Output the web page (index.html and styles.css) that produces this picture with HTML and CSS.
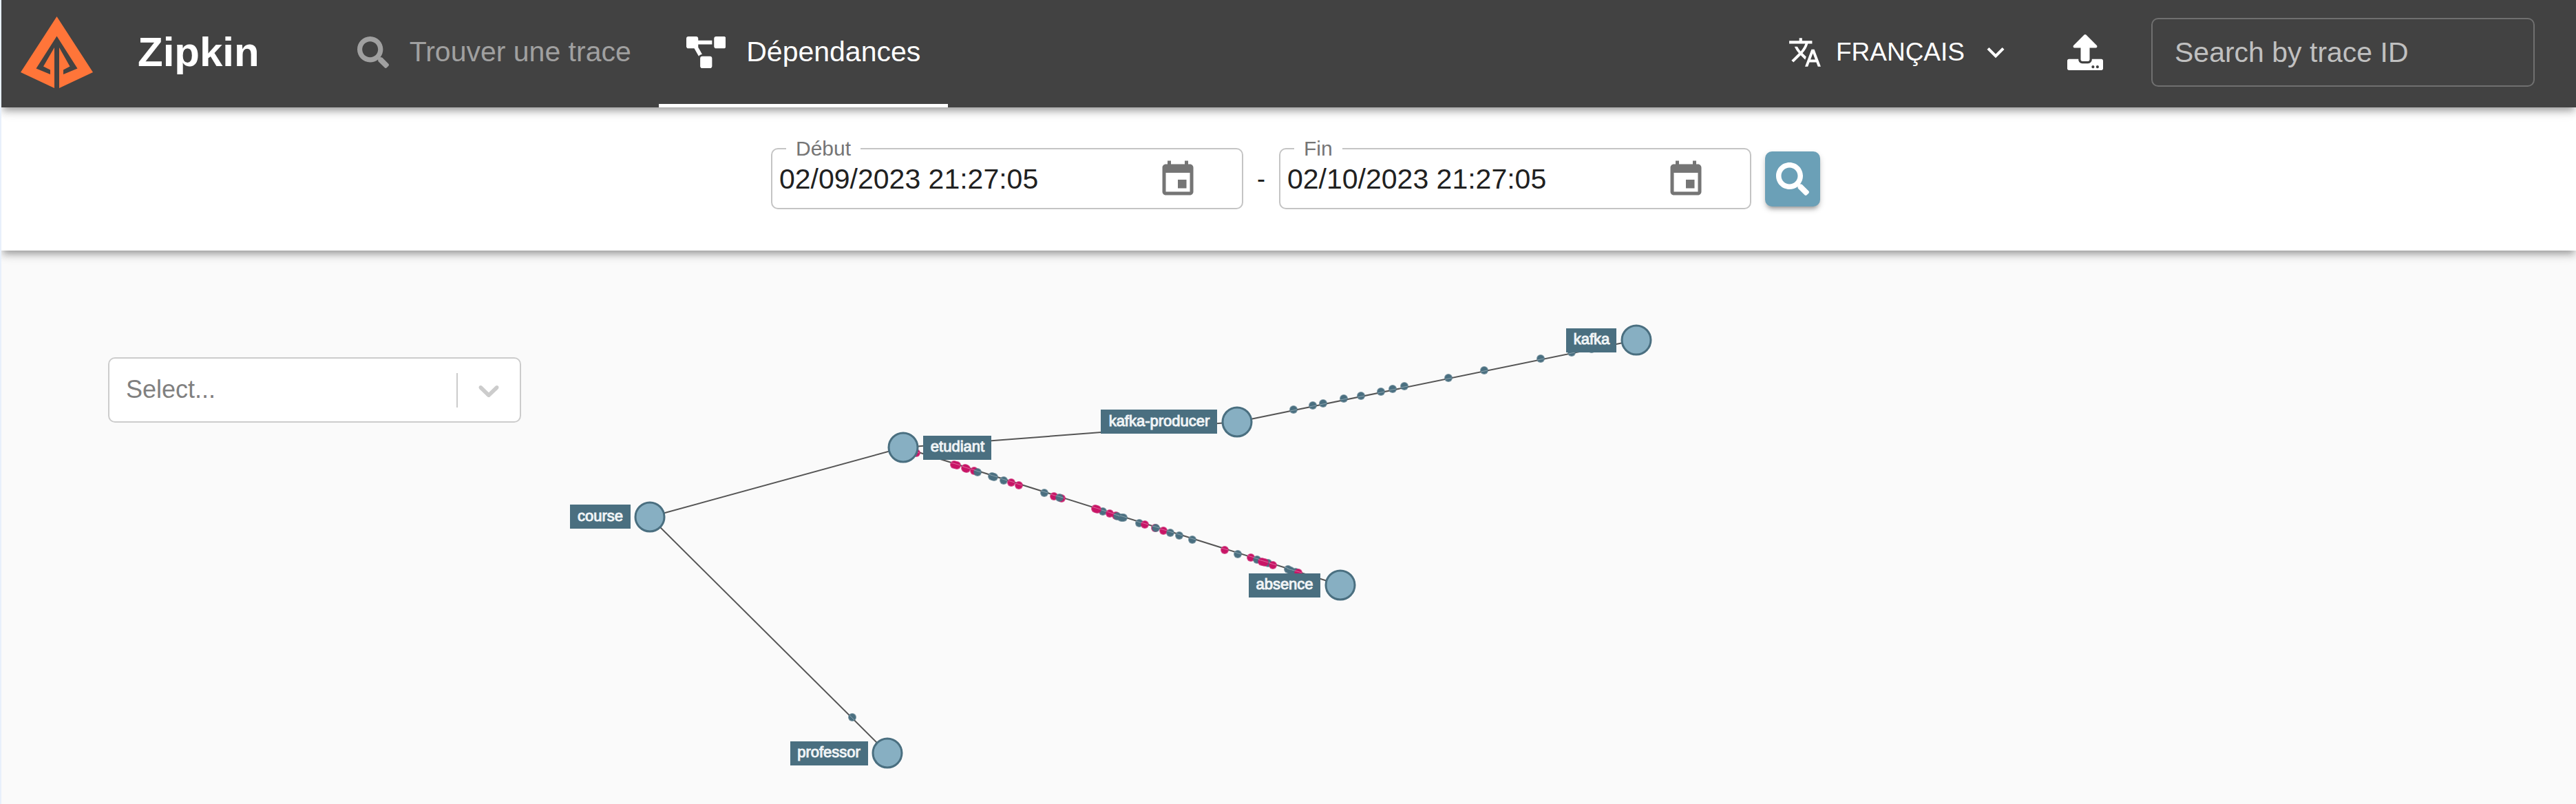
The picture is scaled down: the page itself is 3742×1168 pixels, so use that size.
FILE: index.html
```html
<!DOCTYPE html>
<html lang="fr">
<head>
<meta charset="utf-8">
<title>Zipkin</title>
<meta name="viewport" content="width=device-width, initial-scale=1">
<link rel="stylesheet" href="styles.css">
</head>
<body>
<header class="app-bar">
  <svg class="logo" viewBox="0 0 105 104" aria-hidden="true"><path d="M52.500 0 0 81 49 104V45L33 72.500 43 77.500V84L22.500 75.500 52.500 28.500 82.500 75.500 62 84V77.500L71.500 72.500 56 45V104L105 81Z"/></svg>
  <h1 class="brand">Zipkin</h1>
  <nav class="tabs">
    <a class="tab" href="#traces">
      <svg class="tab-icon" viewBox="0 0 512 512" aria-hidden="true"><path d="M505 442.700L405.300 343c-4.500-4.500-10.600-7-17-7H372c27.600-35.300 44-79.700 44-128C416 93.100 322.900 0 208 0S0 93.100 0 208s93.100 208 208 208c48.300 0 92.700-16.400 128-44v16.300c0 6.400 2.500 12.500 7 17l99.700 99.700c9.400 9.400 24.600 9.400 33.900 0l28.300-28.300c9.400-9.400 9.400-24.600.1-34zM208 336c-70.700 0-128-57.200-128-128 0-70.700 57.200-128 128-128 70.700 0 128 57.200 128 128 0 70.700-57.200 128-128 128z"/></svg>
      <span>Trouver une trace</span>
    </a>
    <a class="tab tab-active" href="#dependencies" aria-current="page">
      <svg class="tab-icon" viewBox="0 0 640 512" aria-hidden="true"><path d="M384 320H256c-17.670 0-32 14.330-32 32v128c0 17.670 14.330 32 32 32h128c17.670 0 32-14.330 32-32V352c0-17.670-14.330-32-32-32zM192 32c0-17.670-14.330-32-32-32H32C14.330 0 0 14.330 0 32v128c0 17.670 14.330 32 32 32h95.720l73.160 128.040C211.980 300.980 232.400 288 256 288h.280L192 175.510V128h224V64H192V32zM608 0H480c-17.670 0-32 14.330-32 32v128c0 17.670 14.330 32 32 32h128c17.670 0 32-14.330 32-32V32c0-17.670-14.330-32-32-32z"/></svg>
      <span>Dépendances</span>
    </a>
  </nav>
  <div class="tools">
    <button class="language" type="button">
      <svg class="icon-md" viewBox="0 0 24 24" aria-hidden="true"><path d="M12.870 15.070l-2.540-2.510.030-.030c1.740-1.940 2.980-4.170 3.710-6.530H17V4h-7V2H8v2H1v1.990h11.170C11.500 7.920 10.440 9.750 9 11.350 8.070 10.320 7.300 9.190 6.690 8h-2c.73 1.630 1.730 3.170 2.980 4.560l-5.090 5.020L4 19l5-5 3.110 3.110.760-2.040zM18.500 10h-2L12 22h2l1.120-3h4.750L21 22h2l-4.500-12zm-2.620 7l1.620-4.330L19.120 17h-3.240z"/></svg>
      <span class="language-name">FRANÇAIS</span>
      <svg class="icon-md" viewBox="0 0 24 24" aria-hidden="true"><path d="M7.410 8.590L12 13.170l4.590-4.580L18 10l-6 6-6-6 1.410-1.410z"/></svg>
    </button>
    <button class="upload" type="button" aria-label="Upload JSON">
      <svg viewBox="0 0 512 512" aria-hidden="true"><path d="M296 384h-80c-13.300 0-24-10.700-24-24V192h-87.700c-17.800 0-26.700-21.500-14.100-34.100L242.300 5.700c7.500-7.500 19.800-7.500 27.300 0l152.200 152.200c12.600 12.600 3.700 34.100-14.100 34.100H320v168c0 13.300-10.700 24-24 24zm216-8v112c0 13.300-10.700 24-24 24H24c-13.300 0-24-10.700-24-24V376c0-13.300 10.700-24 24-24h136v8c0 30.900 25.100 56 56 56h80c30.900 0 56-25.100 56-56v-8h136c13.300 0 24 10.700 24 24zm-124 88c0-11-9-20-20-20s-20 9-20 20 9 20 20 20 20-9 20-20zm64 0c0-11-9-20-20-20s-20 9-20 20 9 20 20 20 20-9 20-20z"/></svg>
    </button>
    <input class="trace-id" type="text" placeholder="Search by trace ID" aria-label="Search by trace ID">
  </div>
</header>

<form class="range-bar">
  <fieldset class="date-field">
    <legend><label for="start">Début</label></legend>
    <div class="date-row">
      <input id="start" type="text" value="02/09/2023 21:27:05">
      <button class="calendar" type="button" aria-label="Choisir la date de début">
        <svg viewBox="0 0 24 24" aria-hidden="true"><path d="M17 12h-5v5h5v-5zM16 1v2H8V1H6v2H5c-1.110 0-1.990.9-1.990 2L3 19c0 1.100.890 2 2 2h14c1.100 0 2-.9 2-2V5c0-1.100-.9-2-2-2h-1V1h-2zm3 18H5V8h14v11z"/></svg>
      </button>
    </div>
  </fieldset>
  <span class="dash">-</span>
  <fieldset class="date-field">
    <legend><label for="end">Fin</label></legend>
    <div class="date-row">
      <input id="end" type="text" value="02/10/2023 21:27:05">
      <button class="calendar" type="button" aria-label="Choisir la date de fin">
        <svg viewBox="0 0 24 24" aria-hidden="true"><path d="M17 12h-5v5h5v-5zM16 1v2H8V1H6v2H5c-1.110 0-1.990.9-1.990 2L3 19c0 1.100.890 2 2 2h14c1.100 0 2-.9 2-2V5c0-1.100-.9-2-2-2h-1V1h-2zm3 18H5V8h14v11z"/></svg>
      </button>
    </div>
  </fieldset>
  <button class="run" type="submit" aria-label="Rechercher">
    <svg viewBox="0 0 512 512" aria-hidden="true"><path d="M505 442.700L405.300 343c-4.500-4.500-10.600-7-17-7H372c27.600-35.300 44-79.700 44-128C416 93.100 322.900 0 208 0S0 93.100 0 208s93.100 208 208 208c48.300 0 92.700-16.400 128-44v16.300c0 6.400 2.500 12.500 7 17l99.700 99.700c9.400 9.400 24.600 9.400 33.900 0l28.300-28.300c9.400-9.400 9.400-24.600.1-34zM208 336c-70.700 0-128-57.200-128-128 0-70.700 57.200-128 128-128 70.700 0 128 57.200 128 128 0 70.700-57.200 128-128 128z"/></svg>
  </button>
</form>

<main class="stage">
  <svg class="graph" viewBox="2 364 3740 804" role="img" aria-label="Graphe des dépendances">
    <defs>
      <!-- one request dot per edge direction, with the edge showing faintly through -->
      <g id="down"><circle r="6" opacity=".7"/><circle r="5"/><path d="M-5-3 5 0"/></g>
      <g id="up"><circle r="6" opacity=".7"/><circle r="5"/><path d="M-5 2 5 0"/></g>
      <g id="steep"><circle r="6" opacity=".7"/><circle r="5"/><path d="M-4-3 3 4"/></g>
    </defs>
    <g class="edges">
      <path d="M944 751 1312 650"/>
      <path d="M944 751 1289 1094"/>
      <path d="M1312 650 1797 613"/>
      <path d="M1797 613 2377 494"/>
      <path d="M1312 650 1947 850"/>
    </g>
    <g class="dots">
      <use href="#steep" x="1238" y="1042"/>
      <use href="#up" x="1879" y="595"/>
      <use href="#up" x="1907" y="589"/>
      <use href="#up" x="1922" y="586"/>
      <use href="#up" x="1952" y="579"/>
      <use href="#up" x="1977" y="575"/>
      <use href="#up" x="2006" y="569"/>
      <use href="#up" x="2023" y="565"/>
      <use href="#up" x="2040" y="561"/>
      <use href="#up" x="2104" y="549"/>
      <use href="#up" x="2156" y="538"/>
      <use href="#up" x="2238" y="521"/>
      <use href="#up" x="2283" y="512"/>
      <use href="#up" x="2312" y="507"/>
      <use class="err" href="#down" x="1331" y="658"/>
      <use class="err" href="#down" x="1386" y="675"/>
      <use class="err" href="#down" x="1390" y="676"/>
      <use class="err" href="#down" x="1402" y="680"/>
      <use class="err" href="#down" x="1404" y="681"/>
      <use class="err" href="#down" x="1415" y="684"/>
      <use href="#down" x="1420" y="686"/>
      <use href="#down" x="1441" y="692"/>
      <use href="#down" x="1444" y="693"/>
      <use href="#down" x="1458" y="698"/>
      <use class="err" href="#down" x="1469" y="701"/>
      <use class="err" href="#down" x="1480" y="705"/>
      <use href="#down" x="1517" y="716"/>
      <use class="err" href="#down" x="1531" y="721"/>
      <use class="err" href="#down" x="1542" y="724"/>
      <use href="#down" x="1539" y="723"/>
      <use href="#down" x="1602" y="743"/>
      <use class="err" href="#down" x="1591" y="739"/>
      <use class="err" href="#down" x="1594" y="740"/>
      <use class="err" href="#down" x="1612" y="746"/>
      <use class="err" href="#down" x="1621" y="749"/>
      <use href="#down" x="1623" y="750"/>
      <use href="#down" x="1629" y="752"/>
      <use href="#down" x="1632" y="752"/>
      <use href="#down" x="1655" y="760"/>
      <use class="err" href="#down" x="1663" y="762"/>
      <use class="err" href="#down" x="1678" y="767"/>
      <use href="#down" x="1679" y="767"/>
      <use class="err" href="#down" x="1690" y="771"/>
      <use href="#down" x="1700" y="774"/>
      <use href="#down" x="1713" y="778"/>
      <use href="#down" x="1732" y="784"/>
      <use class="err" href="#down" x="1779" y="799"/>
      <use href="#down" x="1798" y="805"/>
      <use class="err" href="#down" x="1817" y="810"/>
      <use href="#down" x="1826" y="813"/>
      <use href="#down" x="1842" y="818"/>
      <use class="err" href="#down" x="1833" y="816"/>
      <use class="err" href="#down" x="1837" y="817"/>
      <use class="err" href="#down" x="1849" y="821"/>
      <use href="#down" x="1871" y="827"/>
      <use href="#down" x="1875" y="829"/>
      <use href="#down" x="1882" y="831"/>
      <use class="err" href="#down" x="1886" y="832"/>
    </g>
    <g class="nodes">
      <circle cx="944" cy="751" r="21"/>
      <circle cx="1312" cy="650" r="21"/>
      <circle cx="1797" cy="613" r="21"/>
      <circle cx="2377" cy="494" r="21"/>
      <circle cx="1947" cy="850" r="21"/>
      <circle cx="1289" cy="1094" r="21"/>
    </g>
    <g class="plates">
      <rect x="828" y="733" width="88" height="35"/>
      <rect x="1341" y="633" width="99" height="35"/>
      <rect x="1599" y="595" width="169" height="35"/>
      <rect x="2275" y="477" width="73" height="35"/>
      <rect x="1814" y="833" width="104" height="35"/>
      <rect x="1148" y="1077" width="113" height="35"/>
    </g>
    <g class="names">
      <text x="872" y="757">course</text>
      <text x="1391" y="656">etudiant</text>
      <text x="1684" y="619">kafka-producer</text>
      <text x="2312" y="500">kafka</text>
      <text x="1866" y="856">absence</text>
      <text x="1204" y="1100">professor</text>
    </g>
  </svg>
  <div class="service-filter">
    <select aria-label="Service">
      <option>Select...</option>
    </select>
    <span class="indicator">
      <svg class="icon-md" viewBox="0 0 20 20" aria-hidden="true"><path d="M4.516 7.548c0.436-0.446 1.043-0.481 1.576 0l3.908 3.747 3.908-3.747c0.533-0.481 1.141-0.446 1.574 0 0.436 0.445 0.408 1.197 0 1.615-0.406 0.418-4.695 4.502-4.695 4.502-0.217 0.223-0.502 0.335-0.787 0.335s-0.570-0.112-0.789-0.335c0 0-4.287-4.084-4.695-4.502s-0.436-1.170 0-1.615z"/></svg>
    </span>
  </div>
</main>
</body>
</html>
```
FILE: styles.css
```css
:root {
  --bar: #424242;
  --primary: #6ba0b7;
  --primary-dark: #4a6f80;
  --node: #87afc2;
  --error: #c81566;
  --shadow: 0 8px 8px -5px rgba(0, 0, 0, .2), 0 8px 10px rgba(0, 0, 0, .14), 0 2px 20px rgba(0, 0, 0, .12);
}

* {
  box-sizing: border-box;
}

body {
  margin: 0;
  min-height: 100vh;
  display: flex;
  flex-direction: column;
  border-left: 2px solid #e8f0fb;
  background: #fafafa;
  color: #212121;
  font-family: "Liberation Sans", Arial, sans-serif;
  font-size: 41px;
}

svg {
  display: block;
  flex: none;
  fill: currentColor;
}

button {
  display: flex;
  align-items: center;
  justify-content: center;
  padding: 0;
  border: 0;
  background: none;
  color: inherit;
  font: inherit;
  cursor: pointer;
}

input,
select {
  min-width: 0;
  margin: 0;
  color: inherit;
  font: inherit;
}

.icon-md {
  width: 50px;
  height: 50px;
}

/* Top bar */
.app-bar {
  position: relative;
  z-index: 2;
  display: flex;
  align-items: center;
  height: 156px;
  padding: 0 60px 4px 28px;
  background: var(--bar);
  color: #fff;
  box-shadow: var(--shadow);
}

.logo {
  width: 105px;
  height: 104px;
  color: #ff7539;
}

.brand {
  margin: 0 102px 0 65px;
  font-size: 60px;
  line-height: 72px;
}

.tabs {
  display: flex;
  align-self: stretch;
  margin-bottom: -4px;
}

.tab {
  display: flex;
  align-items: center;
  gap: 30px;
  padding: 0 40px;
  border-bottom: 5px solid transparent;
  color: #a0a0a0;
  text-decoration: none;
  white-space: nowrap;
}

.tab-active {
  border-bottom-color: #fff;
  color: #fff;
}

.tab-icon {
  height: 46px;
}

.tools {
  display: flex;
  align-items: center;
  margin-left: auto;
}

.language {
  font-size: 37px;
}

.language-name {
  margin: 0 20px;
}

.upload {
  margin: 0 70px 0 79px;
}

.upload svg {
  width: 52px;
  height: 52px;
}

.trace-id {
  width: 557px;
  height: 100px;
  padding: 0 32px;
  border: 2px solid #707070;
  border-radius: 10px;
  background: transparent;
}

.trace-id::placeholder {
  color: #c0c0c0;
  opacity: 1;
}

/* Date range */
.range-bar {
  position: relative;
  z-index: 1;
  display: flex;
  align-items: flex-end;
  justify-content: center;
  gap: 20px;
  padding: 45px 0 60px 20px;
  background: #fff;
  box-shadow: var(--shadow);
}

.date-field {
  width: 686px;
  min-width: 0;
  margin: 0;
  padding: 0 0 11px;
  border: 2px solid #c4c4c4;
  border-radius: 10px;
}

.date-field legend {
  margin-left: 20px;
  padding: 0 14px;
  color: #757575;
  font-size: 30px;
  line-height: 30px;
}

.date-field label {
  display: block;
}

.date-row {
  display: flex;
  align-items: center;
  padding: 0 63px 0 10px;
}

.date-row input {
  flex: 1;
  height: 60px;
  padding: 0 0 2px;
  border: 0;
  background: transparent;
}

.calendar {
  color: #757575;
}

.calendar svg {
  width: 60px;
  height: 60px;
}

.dash {
  font-size: 36px;
  line-height: 88px;
}

.run {
  width: 80px;
  height: 80px;
  margin-bottom: 4px;
  border-radius: 10px;
  background: var(--primary);
  color: #fff;
  box-shadow: 0 6px 6px -4px rgba(0, 0, 0, .3), 0 4px 8px rgba(0, 0, 0, .2);
}

.run svg {
  width: 48px;
  height: 48px;
}

/* Graph area: the filter floats over the top-left of the canvas */
.stage {
  flex: 1;
  display: grid;
  align-items: start;
}

.graph,
.service-filter {
  grid-area: 1 / 1;
}

.graph {
  width: 100%;
}

.edges path {
  fill: none;
  stroke: #555;
  stroke-width: 2;
}

.dots {
  fill: var(--primary-dark);
  stroke: none;
}

.dots .err {
  fill: var(--error);
}

#down path,
#up path,
#steep path {
  stroke: #fff;
  stroke-opacity: .35;
}

.nodes circle {
  fill: var(--node);
  stroke: var(--primary-dark);
  stroke-width: 3;
}

.plates {
  fill: var(--primary-dark);
}

.names {
  fill: #f0f4f6;
  stroke: #f0f4f6;
  stroke-width: 1;
  font-size: 22px;
  text-anchor: middle;
}

.service-filter {
  display: grid;
  grid-template-columns: 1fr auto;
  width: 600px;
  height: 95px;
  margin: 155px 0 0 155px;
  border: 2px solid #ccc;
  border-radius: 10px;
  background: #fff;
}

.service-filter select {
  grid-area: 1 / 1 / 2 / 3;
  appearance: none;
  padding: 0 24px 2px;
  border: 0;
  background: transparent;
  color: #808080;
  font-size: 36px;
}

.indicator {
  grid-area: 1 / 2;
  align-self: center;
  padding: 0 20px;
  border-left: 2px solid #ccc;
  color: #ccc;
  pointer-events: none;
}
```
